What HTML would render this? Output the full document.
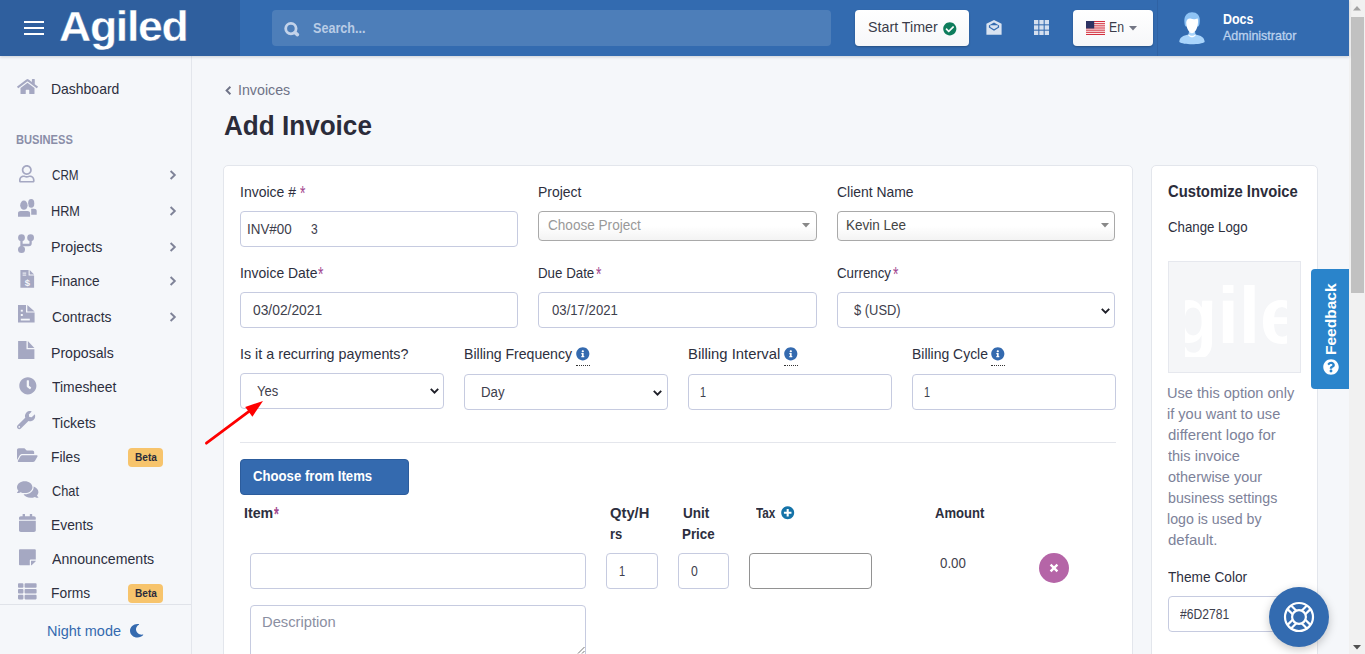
<!DOCTYPE html>
<html lang="en">
<head>
<meta charset="utf-8">
<title>Add Invoice - Agiled</title>
<style>

*{box-sizing:border-box;margin:0;padding:0}
html,body{width:1365px;height:654px;overflow:hidden}
body{position:relative;background:#f5f7fa;font-family:"Liberation Sans",sans-serif;font-size:15px;color:#2d2f3e}
.t{position:absolute;white-space:nowrap;line-height:1;transform-origin:0 0;display:block}
.a{position:absolute}
svg{position:absolute;overflow:visible}
#hdr{left:0;top:0;width:1349px;height:56px;background:#336bb0;box-shadow:0 1px 3px rgba(30,40,70,.2)}
#brand{left:0;top:0;width:240px;height:56px;background:#2f5f9e}
#search{left:272px;top:10px;width:559px;height:36px;border-radius:4px;background:#4d7eb9}
.hbtn{background:linear-gradient(#fff,#f6f7f9);border-radius:4px;box-shadow:0 1px 2px rgba(0,0,0,.25)}
#side{left:0;top:56px;width:192px;height:598px;background:#f5f7fa;border-right:1px solid #e3e6ec}
#night{left:0;top:604px;width:191px;height:50px;border-top:1px solid #e0e3e9;background:#f5f7fa}
.badge{background:#f7c46c;border-radius:4px;width:35px;height:19px}
.card{background:#fff;border:1px solid #e3e6ec;border-radius:5px}
.inp{background:#fff;border:1px solid #c6cbe0;border-radius:4px}
.s2{border:1px solid #a9a9a9;border-radius:4px;background:linear-gradient(#fff 50%,#f3f3f3 100%)}
#sb{left:1349px;top:0;width:16px;height:654px;background:#f1f1f1}
#thumb{left:1351px;top:17px;width:13px;height:276px;background:#c1c1c1}

</style>
</head>
<body>
<main>
<svg style="left:224.5px;top:85.5px" width="7" height="9" viewBox="0 0 7 9"><path d="M5.4 0.8 L1.6 4.5 L5.4 8.2" fill="none" stroke="#6f7387" stroke-width="1.9"/></svg>
<span class="t" style="left:238.3px;top:82.0px;font-size:15.5px;color:#6f7387;transform:scaleX(0.918);">Invoices</span>
<span class="t" style="left:224.0px;top:112.0px;font-size:28px;font-weight:700;color:#2b2c3a;transform:scaleX(0.932);">Add Invoice</span>
<div class="a card" style="left:223px;top:165px;width:910px;height:520px"></div>

<span class="t" style="left:239.6px;top:184.0px;font-size:15px;color:#2d2f3e;transform:scaleX(0.933);">Invoice #</span><span class="t" style="left:300.4px;top:182.0px;font-size:21px;color:#a3488f;transform:scaleX(0.663);">*</span>
<div class="a inp" style="left:240px;top:211px;width:278px;height:36px"></div>
<span class="t" style="left:247.0px;top:222.0px;font-size:14px;color:#3e404c;transform:scaleX(0.958);">INV#00</span><span class="t" style="left:310.5px;top:222.0px;font-size:14px;color:#3e404c;transform:scaleX(0.862);">3</span>
<span class="t" style="left:538.2px;top:184.0px;font-size:15px;color:#2d2f3e;transform:scaleX(0.929);">Project</span>
<div class="a s2" style="left:538px;top:211px;width:279px;height:30px"></div>
<span class="t" style="left:547.9px;top:217.0px;font-size:15px;color:#999;transform:scaleX(0.905);">Choose Project</span><svg style="left:802.0px;top:223.0px" width="8" height="5" viewBox="0 0 8 5"><path d="M0 0 H8 L4 4.6 Z" fill="#888"/></svg>
<span class="t" style="left:837.4px;top:184.0px;font-size:15px;color:#2d2f3e;transform:scaleX(0.928);">Client Name</span>
<div class="a s2" style="left:837px;top:211px;width:278px;height:30px"></div>
<span class="t" style="left:845.6px;top:217.0px;font-size:15px;color:#444;transform:scaleX(0.901);">Kevin Lee</span><svg style="left:1100.5px;top:223.0px" width="8" height="5" viewBox="0 0 8 5"><path d="M0 0 H8 L4 4.6 Z" fill="#888"/></svg>

<span class="t" style="left:239.6px;top:265.0px;font-size:15px;color:#2d2f3e;transform:scaleX(0.929);">Invoice Date</span><span class="t" style="left:317.8px;top:263.0px;font-size:21px;color:#a3488f;transform:scaleX(0.663);">*</span>
<div class="a inp" style="left:240px;top:292px;width:278px;height:36px"></div>
<span class="t" style="left:253.4px;top:303.0px;font-size:14px;color:#3e404c;transform:scaleX(0.987);">03/02/2021</span>
<span class="t" style="left:538.2px;top:265.0px;font-size:15px;color:#2d2f3e;transform:scaleX(0.888);">Due Date</span><span class="t" style="left:595.6px;top:263.0px;font-size:21px;color:#a3488f;transform:scaleX(0.662);">*</span>
<div class="a inp" style="left:538px;top:292px;width:279px;height:36px"></div>
<span class="t" style="left:552.0px;top:303.0px;font-size:14px;color:#3e404c;transform:scaleX(0.940);">03/17/2021</span>
<span class="t" style="left:837.4px;top:265.0px;font-size:15px;color:#2d2f3e;transform:scaleX(0.888);">Currency</span><span class="t" style="left:893.0px;top:263.0px;font-size:21px;color:#a3488f;transform:scaleX(0.662);">*</span>
<div class="a inp" style="left:837px;top:292px;width:278px;height:36px"></div>
<span class="t" style="left:853.9px;top:303.0px;font-size:14px;color:#3e404c;transform:scaleX(0.922);">$ (USD)</span><svg style="left:1100.8px;top:307.6px" width="9" height="6" viewBox="0 0 9 6"><path d="M0.8 0.9 L4.5 4.6 L8.2 0.9" fill="none" stroke="#1e1f28" stroke-width="1.9"/></svg>

<span class="t" style="left:239.5px;top:346.0px;font-size:15px;color:#2d2f3e;transform:scaleX(0.953);">Is it a recurring payments?</span>
<div class="a inp" style="left:240px;top:373px;width:204px;height:36px"></div>
<span class="t" style="left:257.0px;top:384.0px;font-size:14px;color:#3e404c;transform:scaleX(0.928);">Yes</span><svg style="left:429.6px;top:388.4px" width="9" height="6" viewBox="0 0 9 6"><path d="M0.8 0.9 L4.5 4.6 L8.2 0.9" fill="none" stroke="#1e1f28" stroke-width="1.9"/></svg>
<span class="t" style="left:463.6px;top:346.0px;font-size:15px;color:#2d2f3e;transform:scaleX(0.939);">Billing Frequency</span><svg style="left:576.3px;top:347.3px" width="13.6" height="13.6" viewBox="0 0 512 512" preserveAspectRatio="none"><path fill="#346aaf" d="M256 8C119.043 8 8 119.083 8 256c0 136.997 111.043 248 248 248s248-111.003 248-248C504 119.083 392.957 8 256 8zm0 110c23.196 0 42 18.804 42 42s-18.804 42-42 42-42-18.804-42-42 18.804-42 42-42zm56 254c0 6.627-5.373 12-12 12h-88c-6.627 0-12-5.373-12-12v-24c0-6.627 5.373-12 12-12h12v-64h-12c-6.627 0-12-5.373-12-12v-24c0-6.627 5.373-12 12-12h64c6.627 0 12 5.373 12 12v100h12c6.627 0 12 5.373 12 12v24z"/></svg><div class="a" style="left:576.3px;top:364.9px;width:14px;border-top:1px dotted #333"></div>
<div class="a inp" style="left:464px;top:374px;width:204px;height:36px"></div>
<span class="t" style="left:480.5px;top:385.0px;font-size:14px;color:#3e404c;transform:scaleX(0.946);">Day</span><svg style="left:653.4px;top:389.6px" width="9" height="6" viewBox="0 0 9 6"><path d="M0.8 0.9 L4.5 4.6 L8.2 0.9" fill="none" stroke="#1e1f28" stroke-width="1.9"/></svg>
<span class="t" style="left:687.7px;top:346.0px;font-size:15px;color:#2d2f3e;transform:scaleX(0.988);">Billing Interval</span><svg style="left:784.2px;top:347.3px" width="13.6" height="13.6" viewBox="0 0 512 512" preserveAspectRatio="none"><path fill="#346aaf" d="M256 8C119.043 8 8 119.083 8 256c0 136.997 111.043 248 248 248s248-111.003 248-248C504 119.083 392.957 8 256 8zm0 110c23.196 0 42 18.804 42 42s-18.804 42-42 42-42-18.804-42-42 18.804-42 42-42zm56 254c0 6.627-5.373 12-12 12h-88c-6.627 0-12-5.373-12-12v-24c0-6.627 5.373-12 12-12h12v-64h-12c-6.627 0-12-5.373-12-12v-24c0-6.627 5.373-12 12-12h64c6.627 0 12 5.373 12 12v100h12c6.627 0 12 5.373 12 12v24z"/></svg><div class="a" style="left:784.2px;top:364.9px;width:14px;border-top:1px dotted #333"></div>
<div class="a inp" style="left:688px;top:374px;width:204px;height:36px"></div>
<span class="t" style="left:700.2px;top:385.0px;font-size:14px;color:#3e404c;transform:scaleX(0.771);">1</span>
<span class="t" style="left:911.5px;top:346.0px;font-size:15px;color:#2d2f3e;transform:scaleX(0.930);">Billing Cycle</span><svg style="left:991.3px;top:347.3px" width="13.6" height="13.6" viewBox="0 0 512 512" preserveAspectRatio="none"><path fill="#346aaf" d="M256 8C119.043 8 8 119.083 8 256c0 136.997 111.043 248 248 248s248-111.003 248-248C504 119.083 392.957 8 256 8zm0 110c23.196 0 42 18.804 42 42s-18.804 42-42 42-42-18.804-42-42 18.804-42 42-42zm56 254c0 6.627-5.373 12-12 12h-88c-6.627 0-12-5.373-12-12v-24c0-6.627 5.373-12 12-12h12v-64h-12c-6.627 0-12-5.373-12-12v-24c0-6.627 5.373-12 12-12h64c6.627 0 12 5.373 12 12v100h12c6.627 0 12 5.373 12 12v24z"/></svg><div class="a" style="left:991.3px;top:364.9px;width:14px;border-top:1px dotted #333"></div>
<div class="a inp" style="left:912px;top:374px;width:204px;height:36px"></div>
<span class="t" style="left:924.2px;top:385.0px;font-size:14px;color:#3e404c;transform:scaleX(0.771);">1</span>

<div class="a" style="left:240px;top:442px;width:876px;height:1px;background:#e4e6ec"></div>
<div class="a" style="left:240px;top:459px;width:169px;height:36px;background:#346aaf;border-radius:4px;border:1px solid #2c5c9c"></div>
<span class="t" style="left:252.9px;top:468.0px;font-size:15px;font-weight:700;color:#fff;transform:scaleX(0.877);">Choose from Items</span>

<span class="t" style="left:244.4px;top:505.0px;font-size:15px;font-weight:700;color:#2d2f3e;transform:scaleX(0.946);">Item</span><span class="t" style="left:274.3px;top:503.0px;font-size:21px;font-weight:700;color:#a3488f;transform:scaleX(0.589);">*</span>
<span class="t" style="left:610.0px;top:505.0px;font-size:15px;font-weight:700;color:#2d2f3e;transform:scaleX(0.983);">Qty/H</span><span class="t" style="left:610.0px;top:526.0px;font-size:15px;font-weight:700;color:#2d2f3e;transform:scaleX(0.867);">rs</span>
<span class="t" style="left:683.0px;top:505.0px;font-size:15px;font-weight:700;color:#2d2f3e;transform:scaleX(0.902);">Unit</span><span class="t" style="left:682.1px;top:526.0px;font-size:15px;font-weight:700;color:#2d2f3e;transform:scaleX(0.891);">Price</span>
<span class="t" style="left:756.4px;top:505.0px;font-size:15px;font-weight:700;color:#2d2f3e;transform:scaleX(0.784);">Tax</span><svg style="left:781.0px;top:506.4px" width="13.4" height="13.4" viewBox="0 0 512 512" preserveAspectRatio="none"><path fill="#1573a8" d="M256 8C119 8 8 119 8 256s111 248 248 248 248-111 248-248S393 8 256 8zm144 276c0 6.600-5.400 12-12 12h-92v92c0 6.600-5.400 12-12 12h-56c-6.600 0-12-5.400-12-12v-92h-92c-6.600 0-12-5.400-12-12v-56c0-6.600 5.400-12 12-12h92v-92c0-6.600 5.400-12 12-12h56c6.600 0 12 5.400 12 12v92h92c6.600 0 12 5.400 12 12v56z"/></svg>
<span class="t" style="left:934.9px;top:505.0px;font-size:15px;font-weight:700;color:#2d2f3e;transform:scaleX(0.870);">Amount</span>
<div class="a inp" style="left:250px;top:553px;width:336px;height:36px"></div>
<div class="a inp" style="left:606px;top:553px;width:52px;height:36px"></div><span class="t" style="left:618.7px;top:564.0px;font-size:14px;color:#3e404c;transform:scaleX(0.786);">1</span>
<div class="a inp" style="left:678px;top:553px;width:51px;height:36px"></div><span class="t" style="left:691.0px;top:564.0px;font-size:14px;color:#3e404c;transform:scaleX(0.875);">0</span>
<div class="a" style="left:749px;top:553px;width:123px;height:36px;background:#fff;border:1px solid #929292;border-radius:4px"></div>
<span class="t" style="left:939.9px;top:556.0px;font-size:14px;color:#3e404c;transform:scaleX(0.950);">0.00</span>
<div class="a" style="left:1039px;top:553px;width:30px;height:30px;border-radius:50%;background:#b565a7"></div>
<svg style="left:1049px;top:563px" width="10" height="10" viewBox="0 0 10 10"><path d="M1.6 1.6 L8.4 8.4 M8.4 1.6 L1.6 8.4" stroke="#fff" stroke-width="2.4"/></svg>
<div class="a inp" style="left:250px;top:605px;width:336px;height:60px"></div>
<span class="t" style="left:262.4px;top:614.0px;font-size:15px;color:#8b8fa2;transform:scaleX(0.983);">Description</span>
<svg style="left:577px;top:646px" width="8" height="8" viewBox="0 0 8 8"><path d="M7.5 1 L1 7.5 M7.5 5 L5 7.5" stroke="#777" stroke-width="1"/></svg>

<svg style="left:200px;top:395px" width="70" height="55" viewBox="200 395 70 55"><path d="M206.4 443.2 L250 410.6" stroke="#fe0000" stroke-width="2.7" stroke-linecap="round"/><path d="M263 401 L245.2 407 L252.4 416.7 Z" fill="#fe0000"/></svg>
</main>
<aside>
<div class="a card" style="left:1151px;top:165px;width:167px;height:520px"></div>
<span class="t" style="left:1168.3px;top:183.0px;font-size:16.5px;font-weight:700;color:#2b2c3a;transform:scaleX(0.896);">Customize Invoice</span>
<span class="t" style="left:1168.0px;top:219.0px;font-size:15px;color:#2d2f3e;transform:scaleX(0.883);">Change Logo</span>
<div class="a" style="left:1168px;top:261px;width:133px;height:112px;background:#f5f6f8;border:1px solid #e6e8ee;overflow:hidden">
 <div class="a" style="left:16px;top:23px;width:102px;height:72px;overflow:hidden"><span class="t" style="left:-70.5px;top:-9.0px;font-size:80px;font-weight:700;color:#fff;transform:scaleX(0.960);">Agiled</span></div>
</div>
<span class="t" style="left:1166.9px;top:385.0px;font-size:15px;color:#7d8299;transform:scaleX(0.972);">Use this option only</span><span class="t" style="left:1166.9px;top:406.0px;font-size:15px;color:#7d8299;transform:scaleX(0.970);">if you want to use</span><span class="t" style="left:1167.9px;top:427.0px;font-size:15px;color:#7d8299;transform:scaleX(0.996);">different logo for</span><span class="t" style="left:1167.9px;top:448.0px;font-size:15px;color:#7d8299;transform:scaleX(0.969);">this invoice</span><span class="t" style="left:1167.9px;top:469.0px;font-size:15px;color:#7d8299;transform:scaleX(0.964);">otherwise your</span><span class="t" style="left:1167.9px;top:490.0px;font-size:15px;color:#7d8299;transform:scaleX(0.950);">business settings</span><span class="t" style="left:1167.0px;top:511.0px;font-size:15px;color:#7d8299;transform:scaleX(0.944);">logo is used by</span><span class="t" style="left:1167.9px;top:532.0px;font-size:15px;color:#7d8299;transform:scaleX(1.003);">default.</span>
<span class="t" style="left:1167.9px;top:569.0px;font-size:15px;color:#2d2f3e;transform:scaleX(0.913);">Theme Color</span>
<div class="a inp" style="left:1168px;top:596px;width:134px;height:36px"></div>
<span class="t" style="left:1180.4px;top:607.0px;font-size:14px;color:#3e404c;transform:scaleX(0.866);">#6D2781</span>

<div class="a" style="left:1311px;top:269px;width:38px;height:120px;background:#2a84cb;border-radius:4px 0 0 4px"></div>
<span class="t" style="left:1322.6px;top:354.5px;font-size:15.5px;font-weight:700;color:#fff;transform:rotate(-90deg)">Feedback</span>
<svg style="left:1323.0px;top:359.0px" width="16.0" height="16.0" viewBox="0 0 512 512" preserveAspectRatio="none"><path fill="#fff" d="M504 256c0 136.997-111.043 248-248 248S8 392.997 8 256C8 119.083 119.043 8 256 8s248 111.083 248 248zM262.655 90c-54.497 0-89.255 22.957-116.549 63.758-3.536 5.286-2.353 12.415 2.715 16.258l34.699 26.310c5.205 3.947 12.621 3.008 16.665-2.122 17.864-22.658 30.113-35.797 57.303-35.797 20.429 0 45.698 13.148 45.698 32.958 0 14.976-12.363 22.667-32.534 33.976C247.128 238.528 216 254.941 216 296v4c0 6.627 5.373 12 12 12h56c6.627 0 12-5.373 12-12v-1.333c0-28.462 83.186-29.647 83.186-106.667 0-58.002-60.165-102-116.531-102zM256 338c-25.365 0-46 20.635-46 46 0 25.364 20.635 46 46 46s46-20.636 46-46c0-25.365-20.635-46-46-46z"/></svg>

<div class="a" style="left:1269px;top:587px;width:60px;height:60px;border-radius:50%;background:#336bb0;box-shadow:0 3px 10px rgba(0,0,0,.22)"></div>
<svg style="left:1283px;top:601px" width="32" height="32" viewBox="-16 -16 32 32"><g fill="none" stroke="#fff" stroke-width="2.2"><circle r="14"/><circle r="6.9"/><path d="M6.3 2.7 L11.5 7.9 M2.7 6.3 L7.9 11.5 M-6.3 2.7 L-11.5 7.9 M-2.7 6.3 L-7.9 11.5 M6.3 -2.7 L11.5 -7.9 M2.7 -6.3 L7.9 -11.5 M-6.3 -2.7 L-11.5 -7.9 M-2.7 -6.3 L-7.9 -11.5"/></g></svg>

<div id="sb" class="a"></div><div id="thumb" class="a"></div>
<svg style="left:1353px;top:6px" width="8" height="5" viewBox="0 0 8 5"><path d="M0 4.5 H8 L4 0 Z" fill="#a3a3a3"/></svg>
<svg style="left:1353px;top:645px" width="8" height="5" viewBox="0 0 8 5"><path d="M0 0 H8 L4 4.5 Z" fill="#505050"/></svg>
</aside>
<nav><div id="side" class="a"></div>
<svg style="left:17.0px;top:78.4px" width="21.0" height="17.2" viewBox="0 0 576 512" preserveAspectRatio="none"><path fill="#a5a8c2" d="M280.37 148.26L96 300.11V464a16 16 0 0 0 16 16l112.06-.29a16 16 0 0 0 15.92-16V368a16 16 0 0 1 16-16h64a16 16 0 0 1 16 16v95.64a16 16 0 0 0 16 16.05L464 480a16 16 0 0 0 16-16V300L295.67 148.26a12.19 12.19 0 0 0-15.3 0zM571.6 251.47L488 182.56V44.05a12 12 0 0 0-12-12h-56a12 12 0 0 0-12 12v72.61L318.47 43a48 48 0 0 0-61 0L4.34 251.47a12 12 0 0 0-1.6 16.9l25.5 31A12 12 0 0 0 45.15 301l235.22-193.74a12.19 12.19 0 0 1 15.3 0L530.9 301a12 12 0 0 0 16.9-1.6l25.5-31a12 12 0 0 0-1.7-16.93z"/></svg><span class="t" style="left:50.8px;top:81.0px;font-size:15px;color:#2d2f3e;transform:scaleX(0.931);">Dashboard</span>
<span class="t" style="left:16.3px;top:133.0px;font-size:13px;font-weight:700;color:#8a8ea8;transform:scaleX(0.855);">BUSINESS</span>
<svg style="left:19.4px;top:164.5px" width="15.6" height="17.6" viewBox="0 0 448 512" preserveAspectRatio="none"><path fill="#a5a8c2" d="M313.6 304c-28.7 0-42.5 16-89.6 16-47.1 0-60.8-16-89.6-16C60.2 304 0 364.2 0 438.4V464c0 26.5 21.5 48 48 48h352c26.5 0 48-21.5 48-48v-25.6c0-74.2-60.2-134.4-134.4-134.4zM400 464H48v-25.6c0-47.6 38.8-86.4 86.4-86.4 14.6 0 38.3 16 89.6 16 51.7 0 74.9-16 89.6-16 47.6 0 86.4 38.8 86.4 86.4V464zM224 288c79.5 0 144-64.5 144-144S303.5 0 224 0 80 64.5 80 144s64.5 144 144 144zm0-240c52.9 0 96 43.1 96 96s-43.1 96-96 96-96-43.1-96-96 43.1-96 96-96z"/></svg><span class="t" style="left:51.7px;top:167.0px;font-size:15px;color:#2d2f3e;transform:scaleX(0.778);">CRM</span><svg style="left:169px;top:170.2px" width="8" height="10" viewBox="0 0 8 10"><path d="M1.6 1 L5.8 5 L1.6 9" fill="none" stroke="#7f8398" stroke-width="1.9" stroke-linejoin="miter"/></svg>
<svg style="left:16px;top:197px" width="23" height="22" viewBox="16 197 23 22"><g fill="#a5a8c2"><ellipse cx="31.2" cy="203.4" rx="3.1" ry="4.3"/><path d="M31.2 208.7 H34 C35.6 208.7 36.7 209.6 36.7 211 V214.8 H31.2 Z"/></g><g fill="#a5a8c2" stroke="#f5f7fa" stroke-width="1.6" paint-order="stroke"><ellipse cx="23.9" cy="205.2" rx="3.7" ry="4.6"/><path d="M18 216.7 V213 C18 211.6 19.2 210.9 20.6 210.9 H27.5 C28.9 210.9 30.1 211.6 30.1 213 V216.7 Z"/></g></svg><span class="t" style="left:50.9px;top:203.0px;font-size:15px;color:#2d2f3e;transform:scaleX(0.848);">HRM</span><svg style="left:169px;top:206.2px" width="8" height="10" viewBox="0 0 8 10"><path d="M1.6 1 L5.8 5 L1.6 9" fill="none" stroke="#7f8398" stroke-width="1.9" stroke-linejoin="miter"/></svg>
<svg style="left:16px;top:232px" width="22" height="23" viewBox="16 232 22 23"><g fill="#a5a8c2"><circle cx="21.5" cy="237.7" r="3.4"/><circle cx="30.6" cy="237.7" r="3.4"/><circle cx="21.5" cy="249.4" r="3.5"/></g><path d="M21.5 238 V249 M30.6 238 V243.2 Q30.6 245 28.8 245 H21.5" fill="none" stroke="#a5a8c2" stroke-width="2.3"/></svg><span class="t" style="left:50.8px;top:239.0px;font-size:15px;color:#2d2f3e;transform:scaleX(0.949);">Projects</span><svg style="left:169px;top:242.0px" width="8" height="10" viewBox="0 0 8 10"><path d="M1.6 1 L5.8 5 L1.6 9" fill="none" stroke="#7f8398" stroke-width="1.9" stroke-linejoin="miter"/></svg>
<svg style="left:18px;top:268px" width="19" height="22" viewBox="18 268 19 22"><g fill="#a5a8c2"><path d="M20.4 270 H28.6 V275.6 H34.1 V287.8 H20.4 Z"/><path d="M29.7 270 L34.1 274.5 H29.7 Z"/></g><g fill="#f5f7fa"><rect x="22.6" y="272.6" width="3.6" height="1"/><rect x="22.6" y="274.6" width="3.6" height="1"/></g><text x="27.3" y="285.8" font-size="9.5" font-weight="700" text-anchor="middle" fill="#f5f7fa" font-family="Liberation Sans,sans-serif">$</text></svg><span class="t" style="left:50.8px;top:273.0px;font-size:15px;color:#2d2f3e;transform:scaleX(0.911);">Finance</span><svg style="left:169px;top:276.2px" width="8" height="10" viewBox="0 0 8 10"><path d="M1.6 1 L5.8 5 L1.6 9" fill="none" stroke="#7f8398" stroke-width="1.9" stroke-linejoin="miter"/></svg>
<svg style="left:16px;top:303px" width="21" height="22" viewBox="16 303 21 22"><g fill="#a5a8c2"><path d="M18 305 H26 V312.6 H34.6 V322.6 H18 Z"/><path d="M27.3 305 L34.6 311.4 H27.3 Z"/></g><g fill="#f5f7fa"><rect x="20.8" y="309.8" width="2" height="1.8"/><rect x="20.8" y="314" width="2" height="2"/><rect x="20.8" y="318.7" width="9" height="1.8"/></g></svg><span class="t" style="left:51.7px;top:309.0px;font-size:15px;color:#2d2f3e;transform:scaleX(0.928);">Contracts</span><svg style="left:169px;top:312.2px" width="8" height="10" viewBox="0 0 8 10"><path d="M1.6 1 L5.8 5 L1.6 9" fill="none" stroke="#7f8398" stroke-width="1.9" stroke-linejoin="miter"/></svg>
<svg style="left:16px;top:339px" width="21" height="22" viewBox="16 339 21 22"><g fill="#a5a8c2"><path d="M18.1 341.1 H26.5 V349.3 H34.4 V359 H18.1 Z"/><path d="M27.8 341.1 L34.4 347.9 H27.8 Z"/></g></svg><span class="t" style="left:50.8px;top:345.0px;font-size:15px;color:#2d2f3e;transform:scaleX(0.940);">Proposals</span>
<svg style="left:18.6px;top:376.5px" width="17.7" height="17.7" viewBox="0 0 512 512" preserveAspectRatio="none"><path fill="#a5a8c2" d="M256,8C119,8,8,119,8,256S119,504,256,504,504,393,504,256,393,8,256,8Zm92.490,313h0l-20,25a16,16,0,0,1-22.490,2.500h0l-67-49.720a40,40,0,0,1-15-31.230V112a16,16,0,0,1,16-16h32a16,16,0,0,1,16,16V256l58,42.500A16,16,0,0,1,348.490,321Z"/></svg><span class="t" style="left:51.7px;top:379.0px;font-size:15px;color:#2d2f3e;transform:scaleX(0.927);">Timesheet</span>
<svg style="left:17.3px;top:411.4px" width="18.2" height="18.2" viewBox="0 0 512 512" preserveAspectRatio="none"><path fill="#a5a8c2" d="M507.730 109.100c-2.240-9.030-13.540-12.090-20.120-5.510l-74.360 74.360-67.880-11.310-11.310-67.880 74.360-74.360c6.620-6.620 3.430-17.900-5.660-20.160-47.380-11.740-99.550.91-136.580 37.930-39.640 39.640-50.550 97.100-34.050 147.200L18.740 402.760c-24.990 24.990-24.990 65.510 0 90.500 24.990 24.990 65.510 24.990 90.500 0l213.210-213.210c50.120 16.710 107.470 5.680 147.370-34.220 37.070-37.070 49.700-89.320 37.910-136.730zM64 472c-13.250 0-24-10.750-24-24 0-13.260 10.750-24 24-24s24 10.740 24 24c0 13.250-10.750 24-24 24z"/></svg><span class="t" style="left:51.7px;top:415.0px;font-size:15px;color:#2d2f3e;transform:scaleX(0.932);">Tickets</span>
<svg style="left:17.0px;top:446.0px" width="20.6" height="18.3" viewBox="0 0 576 512" preserveAspectRatio="none"><path fill="#a5a8c2" d="M572.694 292.093L500.270 416.248A63.997 63.997 0 0 1 444.989 448H45.025c-18.523 0-30.064-20.093-20.731-36.093l72.424-124.155A64 64 0 0 1 152 256h399.964c18.523 0 30.064 20.093 20.730 36.093zM152 224h328v-48c0-26.510-21.490-48-48-48H272l-64-64H48C21.490 64 0 85.490 0 112v278.046l69.077-118.418C86.214 242.250 117.989 224 152 224z"/></svg><span class="t" style="left:50.8px;top:449.0px;font-size:15px;color:#2d2f3e;transform:scaleX(0.918);">Files</span>
<svg style="left:17.0px;top:479.7px" width="21.4" height="19.0" viewBox="0 0 576 512" preserveAspectRatio="none"><path fill="#a5a8c2" d="M416 192c0-88.400-93.100-160-208-160S0 103.600 0 192c0 34.300 14.100 65.900 38 92-13.400 30.200-35.500 54.200-35.800 54.500-2.200 2.300-2.800 5.700-1.500 8.700S4.800 352 8 352c36.600 0 66.900-12.300 88.700-25 32.200 15.700 70.300 25 111.300 25 114.900 0 208-71.600 208-160zm122 220c23.900-26 38-57.700 38-92 0-66.900-53.500-124.200-129.300-148.100.9 6.600 1.300 13.300 1.300 20.100 0 105.900-107.700 192-240 192-10.800 0-21.300-.8-31.700-1.900C207.800 439.600 281.800 480 368 480c41 0 79.100-9.200 111.300-25 21.800 12.700 52.100 25 88.700 25 3.200 0 6.100-1.900 7.300-4.800 1.300-2.900.7-6.300-1.500-8.700-.3-.3-22.400-24.200-35.800-54.500z"/></svg><span class="t" style="left:51.7px;top:483.0px;font-size:15px;color:#2d2f3e;transform:scaleX(0.852);">Chat</span>
<svg style="left:18.8px;top:514.0px" width="16.8" height="18.0" viewBox="0 0 448 512" preserveAspectRatio="none"><path fill="#a5a8c2" d="M12 192h424c6.600 0 12 5.400 12 12v260c0 26.500-21.500 48-48 48H48c-26.500 0-48-21.500-48-48V204c0-6.600 5.400-12 12-12zm436-44v-36c0-26.500-21.500-48-48-48h-48V12c0-6.600-5.400-12-12-12h-40c-6.600 0-12 5.400-12 12v52H160V12c0-6.600-5.400-12-12-12h-40c-6.600 0-12 5.400-12 12v52H48C21.500 64 0 85.500 0 112v36c0 6.600 5.400 12 12 12h424c6.600 0 12-5.400 12-12z"/></svg><span class="t" style="left:50.8px;top:517.0px;font-size:15px;color:#2d2f3e;transform:scaleX(0.922);">Events</span>
<svg style="left:18.8px;top:548.0px" width="16.8" height="18.4" viewBox="0 0 448 512" preserveAspectRatio="none"><path fill="#a5a8c2" d="M312 320h136V56c0-13.300-10.700-24-24-24H24C10.700 32 0 42.700 0 56v400c0 13.300 10.700 24 24 24h264V344c0-13.200 10.800-24 24-24zm129 55l-98 98c-4.500 4.500-10.600 7-17 7h-6V352h128v6.100c0 6.300-2.500 12.400-7 16.900z"/></svg><span class="t" style="left:51.7px;top:551.0px;font-size:15px;color:#2d2f3e;transform:scaleX(0.942);">Announcements</span>
<svg style="left:18.0px;top:581.9px" width="18.6" height="18.6" viewBox="0 0 512 512" preserveAspectRatio="none"><path fill="#a5a8c2" d="M149.333 216v80c0 13.255-10.745 24-24 24H24c-13.255 0-24-10.745-24-24v-80c0-13.255 10.745-24 24-24h101.333c13.255 0 24 10.745 24 24zM0 376v80c0 13.255 10.745 24 24 24h101.333c13.255 0 24-10.745 24-24v-80c0-13.255-10.745-24-24-24H24c-13.255 0-24 10.745-24 24zM125.333 32H24C10.745 32 0 42.745 0 56v80c0 13.255 10.745 24 24 24h101.333c13.255 0 24-10.745 24-24V56c0-13.255-10.745-24-24-24zm80 448H488c13.255 0 24-10.745 24-24v-80c0-13.255-10.745-24-24-24H205.333c-13.255 0-24 10.745-24 24v80c0 13.255 10.745 24 24 24zm-24-424v80c0 13.255 10.745 24 24 24H488c13.255 0 24-10.745 24-24V56c0-13.255-10.745-24-24-24H205.333c-13.255 0-24 10.745-24 24zm0 160v80c0 13.255 10.745 24 24 24H488c13.255 0 24-10.745 24-24v-80c0-13.255-10.745-24-24-24H205.333c-13.255 0-24 10.745-24 24z"/></svg><span class="t" style="left:50.8px;top:585.0px;font-size:15px;color:#2d2f3e;transform:scaleX(0.922);">Forms</span>
<div class="a badge" style="left:128px;top:448px"></div><span class="t" style="left:134.5px;top:452.0px;font-size:11.5px;font-weight:700;color:#2a2b3c;transform:scaleX(0.877);">Beta</span>
<div class="a badge" style="left:128px;top:584px"></div><span class="t" style="left:134.5px;top:588.0px;font-size:11.5px;font-weight:700;color:#2a2b3c;transform:scaleX(0.877);">Beta</span>

<div id="night" class="a"></div>
<span class="t" style="left:47.3px;top:623.0px;font-size:15px;color:#346aaf;transform:scaleX(0.965);">Night mode</span>
<svg style="left:130.0px;top:624.3px" width="13.4" height="13.6" viewBox="27 0 460 512" preserveAspectRatio="none"><path fill="#346aaf" d="M283.211 512c78.962 0 151.079-35.925 198.857-94.792 7.068-8.708-.639-21.430-11.562-19.350-124.203 23.654-238.262-71.576-238.262-196.954 0-72.222 38.662-138.635 101.498-174.394 9.686-5.512 7.250-20.197-3.756-22.230A258.156 258.156 0 0 0 283.211 0c-141.309 0-256 114.511-256 256 0 141.309 114.511 256 256 256z"/></svg>
</nav>
<header>
<div id="hdr" class="a"></div>
<div id="brand" class="a"></div>
<div class="a" style="left:24px;top:21px;width:20px;height:2px;background:#fff;box-shadow:0 6px 0 #fff,0 12px 0 #fff"></div>
<span class="t" style="left:59.2px;top:5.0px;font-size:42.6px;font-weight:700;color:#fff;transform:scaleX(1.045);-webkit-text-stroke:.35px #2f5f9e;letter-spacing:-1.2px;">Agiled</span>
<div id="search" class="a"></div>
<svg style="left:284px;top:21.5px" width="16" height="15" viewBox="0 0 16 15"><circle cx="6.9" cy="6.6" r="5.2" fill="none" stroke="#c3d3ea" stroke-width="2.8"/><path d="M11 10.6 L13.4 12.6" stroke="#c3d3ea" stroke-width="3.6" stroke-linecap="round"/></svg>
<span class="t" style="left:312.8px;top:20.0px;font-size:15px;font-weight:700;color:#b9cce6;transform:scaleX(0.839);">Search...</span>
<div class="a hbtn" style="left:855px;top:10px;width:114px;height:36px"></div>
<span class="t" style="left:868.0px;top:19.0px;font-size:15px;color:#3a3c4a;transform:scaleX(0.951);">Start Timer</span>
<svg style="left:942.7px;top:21.8px" width="13.6" height="13.6" viewBox="0 0 512 512" preserveAspectRatio="none"><path fill="#0e7d5c" d="M504 256c0 136.967-111.033 248-248 248S8 392.967 8 256 119.033 8 256 8s248 111.033 248 248zM227.314 387.314l184-184c6.248-6.248 6.248-16.379 0-22.627l-22.627-22.627c-6.248-6.249-16.379-6.249-22.628 0L216 308.118l-70.059-70.059c-6.248-6.248-16.379-6.248-22.628 0l-22.627 22.627c-6.248 6.248-6.248 16.379 0 22.627l104 104c6.249 6.249 16.379 6.249 22.628.001z"/></svg>
<svg style="left:985.5px;top:19.5px" width="16" height="15" viewBox="0 0 16 15"><path d="M0.4 3.7 L8 0.1 L15.6 3.7 V14.7 H0.4 Z" fill="#d9e3f1"/><path d="M2.9 5.4 L8 2.5 L13.1 5.4 V7.5 L8 10.7 L2.9 7.5 Z" fill="#336bb0"/><path d="M4.2 5.2 H11.8 V6.9 L8 9.2 L4.2 6.9 Z" fill="#d9e3f1"/></svg>
<svg style="left:1034px;top:20px" width="15" height="15" viewBox="0 0 15 15"><g fill="#d4dfef"><rect x="0" y="0" width="4.3" height="4.3"/><rect x="5.35" y="0" width="4.3" height="4.3"/><rect x="10.7" y="0" width="4.3" height="4.3"/><rect x="0" y="5.35" width="4.3" height="4.3"/><rect x="5.35" y="5.35" width="4.3" height="4.3"/><rect x="10.7" y="5.35" width="4.3" height="4.3"/><rect x="0" y="10.7" width="4.3" height="4.3"/><rect x="5.35" y="10.7" width="4.3" height="4.3"/><rect x="10.7" y="10.7" width="4.3" height="4.3"/></g></svg>
<div class="a hbtn" style="left:1073px;top:10px;width:80px;height:36px"></div>
<svg style="left:1086px;top:21px" width="19" height="14" viewBox="0 0 19 14"><rect width="19" height="14" fill="#fff"/><g fill="#d3303f"><rect y="0" width="19" height="1.1"/><rect y="2.15" width="19" height="1.1"/><rect y="4.3" width="19" height="1.1"/><rect y="6.45" width="19" height="1.1"/><rect y="8.6" width="19" height="1.1"/><rect y="10.75" width="19" height="1.1"/><rect y="12.9" width="19" height="1.1"/></g><rect width="8.2" height="7.5" fill="#2c3263"/></svg>
<span class="t" style="left:1108.7px;top:19.0px;font-size:15px;color:#3a3c4a;transform:scaleX(0.817);">En</span>
<svg style="left:1129px;top:26px" width="8" height="5" viewBox="0 0 8 5"><path d="M0 0 H8 L4 4.6 Z" fill="#737684"/></svg>
<div class="a" style="left:1157px;top:0;width:1px;height:56px;background:#2f62a4"></div>
<svg style="left:1179px;top:11.5px" width="26" height="33" viewBox="0 0 26 33"><path d="M0.3 30 C0.5 25 4 23.6 9.5 22.4 L10 19.5 H16 L16.5 22.4 C22 23.6 25.5 25 25.7 30 C22 33 4 33 0.3 30 Z" fill="#a9d4fb"/><path d="M5.5 11 C4.5 3.5 8.5 0.3 13 0.3 C18 0.3 21.8 3.5 20.6 11 C20.4 13.5 19.6 14.3 19 14.6 H7 C6.3 14.3 5.6 13.5 5.5 11 Z" fill="#8ec3f5"/><path d="M7.2 10.5 C7.6 7.6 9 6.3 11.5 6.6 C14 7.6 17 7.4 18.4 6.2 C19.2 8 19.2 9.6 18.9 11.5 C18.5 17 15.6 21.2 13 21.2 C10.4 21.2 7.4 17 7.2 10.5 Z" fill="#fff"/><path d="M9.6 22.3 C11.5 24.3 14.5 24.3 16.4 22.3 L16.7 23.2 C14.6 26 11.4 26 9.3 23.2 Z" fill="#fff"/></svg>
<span class="t" style="left:1222.5px;top:12.0px;font-size:14.5px;font-weight:700;color:#fff;transform:scaleX(0.856);">Docs</span>
<span class="t" style="left:1222.5px;top:29.0px;font-size:13px;color:#bcd2ee;transform:scaleX(0.959);-webkit-text-stroke:.3px #bcd2ee;">Administrator</span>
</header>

</body>
</html>
